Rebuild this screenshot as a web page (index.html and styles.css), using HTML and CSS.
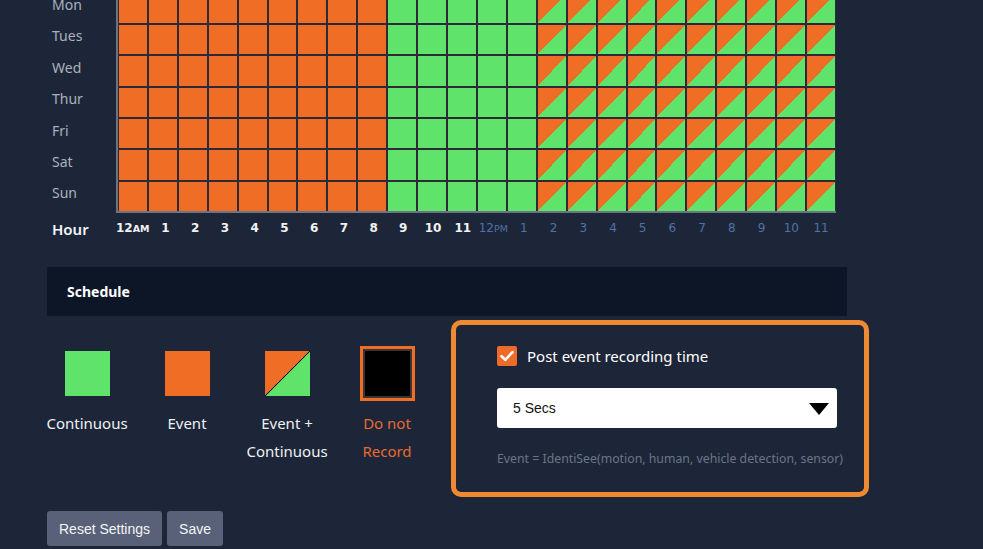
FILE: index.html
```html
<!DOCTYPE html>
<html lang="en">
<head>
<meta charset="utf-8">
<title>Recording Schedule</title>
<link rel="stylesheet" href="styles.css">
</head>
<body>
<div class="page">
  <div class="chart">
    <div class="days">
      <span>Mon</span><span>Tues</span><span>Wed</span><span>Thur</span><span>Fri</span><span>Sat</span><span>Sun</span>
    </div>
    <div class="grid">
      <i class="o"></i><i class="o"></i><i class="o"></i><i class="o"></i><i class="o"></i><i class="o"></i><i class="o"></i><i class="o"></i><i class="o"></i><i class="g"></i><i class="g"></i><i class="g"></i><i class="g"></i><i class="g"></i><i class="m"></i><i class="m"></i><i class="m"></i><i class="m"></i><i class="m"></i><i class="m"></i><i class="m"></i><i class="m"></i><i class="m"></i><i class="m"></i>
      <i class="o"></i><i class="o"></i><i class="o"></i><i class="o"></i><i class="o"></i><i class="o"></i><i class="o"></i><i class="o"></i><i class="o"></i><i class="g"></i><i class="g"></i><i class="g"></i><i class="g"></i><i class="g"></i><i class="m"></i><i class="m"></i><i class="m"></i><i class="m"></i><i class="m"></i><i class="m"></i><i class="m"></i><i class="m"></i><i class="m"></i><i class="m"></i>
      <i class="o"></i><i class="o"></i><i class="o"></i><i class="o"></i><i class="o"></i><i class="o"></i><i class="o"></i><i class="o"></i><i class="o"></i><i class="g"></i><i class="g"></i><i class="g"></i><i class="g"></i><i class="g"></i><i class="m"></i><i class="m"></i><i class="m"></i><i class="m"></i><i class="m"></i><i class="m"></i><i class="m"></i><i class="m"></i><i class="m"></i><i class="m"></i>
      <i class="o"></i><i class="o"></i><i class="o"></i><i class="o"></i><i class="o"></i><i class="o"></i><i class="o"></i><i class="o"></i><i class="o"></i><i class="g"></i><i class="g"></i><i class="g"></i><i class="g"></i><i class="g"></i><i class="m"></i><i class="m"></i><i class="m"></i><i class="m"></i><i class="m"></i><i class="m"></i><i class="m"></i><i class="m"></i><i class="m"></i><i class="m"></i>
      <i class="o"></i><i class="o"></i><i class="o"></i><i class="o"></i><i class="o"></i><i class="o"></i><i class="o"></i><i class="o"></i><i class="o"></i><i class="g"></i><i class="g"></i><i class="g"></i><i class="g"></i><i class="g"></i><i class="m"></i><i class="m"></i><i class="m"></i><i class="m"></i><i class="m"></i><i class="m"></i><i class="m"></i><i class="m"></i><i class="m"></i><i class="m"></i>
      <i class="o"></i><i class="o"></i><i class="o"></i><i class="o"></i><i class="o"></i><i class="o"></i><i class="o"></i><i class="o"></i><i class="o"></i><i class="g"></i><i class="g"></i><i class="g"></i><i class="g"></i><i class="g"></i><i class="m"></i><i class="m"></i><i class="m"></i><i class="m"></i><i class="m"></i><i class="m"></i><i class="m"></i><i class="m"></i><i class="m"></i><i class="m"></i>
      <i class="o"></i><i class="o"></i><i class="o"></i><i class="o"></i><i class="o"></i><i class="o"></i><i class="o"></i><i class="o"></i><i class="o"></i><i class="g"></i><i class="g"></i><i class="g"></i><i class="g"></i><i class="g"></i><i class="m"></i><i class="m"></i><i class="m"></i><i class="m"></i><i class="m"></i><i class="m"></i><i class="m"></i><i class="m"></i><i class="m"></i><i class="m"></i>
    </div>
    <div class="hour-title">Hour</div>
    <div class="hours">
      <span class="am">12<small>AM</small></span><span class="am">1</span><span class="am">2</span><span class="am">3</span><span class="am">4</span><span class="am">5</span><span class="am">6</span><span class="am">7</span><span class="am">8</span><span class="am">9</span><span class="am">10</span><span class="am">11</span>
      <span class="pm">12<small>PM</small></span><span class="pm">1</span><span class="pm">2</span><span class="pm">3</span><span class="pm">4</span><span class="pm">5</span><span class="pm">6</span><span class="pm">7</span><span class="pm">8</span><span class="pm">9</span><span class="pm">10</span><span class="pm">11</span>
    </div>
  </div>

  <div class="panel-header">Schedule</div>

  <div class="panel-body">
    <div class="legend">
      <div class="legend-item">
        <div class="swatch-wrap"><div class="swatch sw-green"></div></div>
        <div class="legend-label">Continuous</div>
      </div>
      <div class="legend-item">
        <div class="swatch-wrap"><div class="swatch sw-orange"></div></div>
        <div class="legend-label">Event</div>
      </div>
      <div class="legend-item">
        <div class="swatch-wrap"><div class="swatch sw-mixed"></div></div>
        <div class="legend-label">Event +<br>Continuous</div>
      </div>
      <div class="legend-item">
        <div class="swatch-wrap"><div class="swatch sw-none"></div></div>
        <div class="legend-label label-none">Do not<br>Record</div>
      </div>
    </div>

    <div class="post-box">
      <div class="check-row">
        <span class="checkbox">
          <svg width="14" height="12" viewBox="0 0 14 12"><path d="M1.5 6.2 L5.3 9.8 L12.5 2.2" fill="none" stroke="#fff" stroke-width="2.6" stroke-linecap="round" stroke-linejoin="round"/></svg>
        </span>
        <span class="check-label">Post event recording time</span>
      </div>
      <div class="select">
        <span>5 Secs</span>
        <svg width="20" height="12" viewBox="0 0 20 12"><path d="M0 0 H20 L10 12 Z" fill="#000"/></svg>
      </div>
      <div class="note">Event = IdentiSee(motion, human, vehicle detection, sensor)</div>
    </div>
  </div>

  <div class="actions">
    <button class="btn">Reset Settings</button>
    <button class="btn">Save</button>
  </div>
</div>
</body>
</html>
```

FILE: styles.css
```css
* { box-sizing: border-box; }

html, body {
  margin: 0;
  background: #1d2638;
  overflow: hidden;
}

body {
  font-family: "Noto Sans", "Open Sans", sans-serif;
  color: #ffffff;
}

.page {
  width: 983px;
  height: 549px;
  overflow: hidden;
}

.chart {
  display: grid;
  grid-template-columns: 64px 720px;
  margin: -7.5px 0 0 52px;
}

.days {
  display: flex;
  flex-direction: column;
  margin-top: -3.5px;
  font-size: 14px;
  color: #aab1bd;
}

.days span {
  height: 31.4px;
  line-height: 31.4px;
}

.grid {
  display: grid;
  grid-template-columns: repeat(24, 1fr);
  grid-auto-rows: 29.4px;
  column-gap: 2px;
  row-gap: 2px;
  padding: 1px 1px 0 1px;
  background: #2b2a36;
  border-left: 2px solid #6b7483;
  border-bottom: 2px solid #6b7483;
}

.grid i { display: block; }
.grid .o { background: #f06d26; }
.grid .g { background: #5fe36a; }
.grid .m { background: linear-gradient(to bottom right, #f06d26 50%, #5fe36a 50%); }

.hour-title {
  font-size: 15px;
  font-weight: 600;
  line-height: 30px;
  margin-top: 1px;
  color: #f4f6fa;
}

.hours {
  display: grid;
  grid-template-columns: repeat(24, 1fr);
  column-gap: 2px;
  padding: 0 1px 0 0;
  margin-top: 0;
  line-height: 30px;
  font-family: "DejaVu Sans", sans-serif;
  font-size: 12px;
  text-align: center;
  white-space: nowrap;
}

.hours span { display: block; }
.hours small { font-size: 9.5px; }
.hours .am { color: #f2f2f2; font-weight: bold; }
.hours .pm { color: #4f71a8; }

.panel-header {
  margin: 23px 0 0 47px;
  width: 800px;
  height: 49px;
  line-height: 49px;
  padding-left: 20px;
  background: #0d1627;
  font-size: 14px;
  font-weight: 700;
  color: #ffffff;
}

.panel-body {
  display: flex;
  align-items: flex-start;
  margin: 4px 0 0 47px;
}

.legend {
  display: flex;
  gap: 20px;
  padding-top: 31px;
}

.legend-item {
  width: 80px;
  display: flex;
  flex-direction: column;
  align-items: center;
}

.swatch-wrap {
  height: 45px;
  display: flex;
  align-items: center;
  justify-content: center;
}

.swatch {
  width: 45px;
  height: 45px;
  flex: none;
}

.sw-green { background: #5fe36a; }
.sw-orange { background: #f06d26; }
.sw-mixed {
  background: linear-gradient(to bottom right, #f06d26 calc(50% - 0.8px), #111 50%, #5fe36a calc(50% + 0.8px));
}
.sw-none {
  width: 55px;
  height: 55px;
  background: #000;
  border: 3px solid #f06d26;
  box-shadow: inset 0 0 0 2px #3a3436;
}

.legend-label {
  margin-top: 13px;
  font-size: 15px;
  line-height: 28px;
  text-align: center;
  color: #eef1f5;
  white-space: nowrap;
}

.label-none { color: #e86a2e; }

.post-box {
  margin-left: 24px;
  width: 418px;
  height: 177px;
  border: 5px solid #ef8a33;
  border-radius: 10px;
  padding: 21px 27px 0 41px;
}

.check-row {
  display: flex;
  align-items: center;
  gap: 10px;
  height: 20px;
}

.checkbox {
  width: 20px;
  height: 20px;
  border-radius: 2px;
  background: #ef6b2a;
  display: flex;
  align-items: center;
  justify-content: center;
}

.check-label {
  font-size: 15px;
  color: #ffffff;
}

.select {
  margin-top: 22px;
  width: 340px;
  height: 40px;
  background: #ffffff;
  border-radius: 3px;
  display: flex;
  align-items: center;
  justify-content: space-between;
  padding: 0 8px 0 16px;
  font-family: "Liberation Sans", Arial, sans-serif;
  font-size: 14px;
  color: #111;
}

.select svg { margin-top: 1px; }

.note {
  margin-top: 23px;
  font-size: 12.3px;
  line-height: 16px;
  color: #6b7587;
  white-space: nowrap;
}

.actions {
  display: flex;
  gap: 5px;
  margin: 14px 0 0 47px;
}

.btn {
  height: 35px;
  padding: 0 12px;
  border: none;
  border-radius: 3px;
  background: #586178;
  color: #f3f4f7;
  font-family: "Liberation Sans", Arial, sans-serif;
  font-size: 14px;
}
```
